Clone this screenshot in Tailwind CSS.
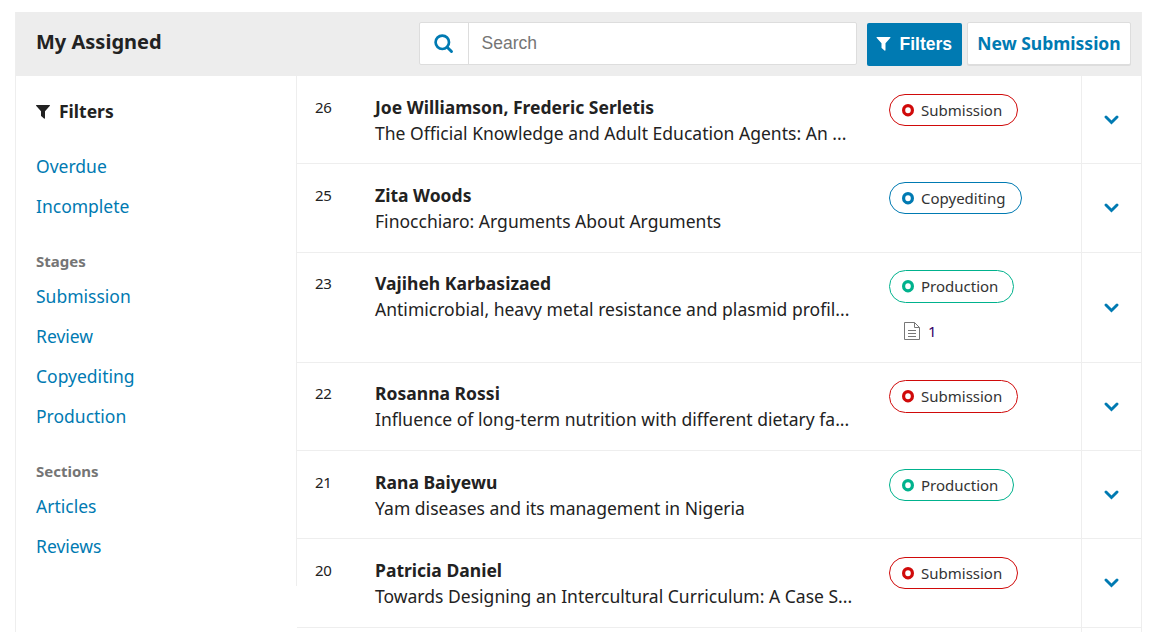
<!DOCTYPE html>
<html lang="en">
<head>
<meta charset="utf-8">
<title>My Assigned</title>
<script src="https://cdn.jsdelivr.net/npm/@tailwindcss/browser@4"></script>
</head>
<body class="h-[632px] overflow-hidden bg-white font-['Noto_Sans',sans-serif] text-[17.5px] leading-[26px] text-[#222]">
<svg class="hidden">
  <symbol id="funnel" viewBox="0 0 14 14"><path d="M0.3 0H13.7Q14.2 .5 13.7 1.1L9 6.200V13.300Q8.700 14.100 8 13.600L5.400 11.200Q5 10.900 5 10.400V6.200L.3 1.100Q-.2.500.3 0Z" fill="currentColor"/></symbol>
  <symbol id="chevron" viewBox="0 0 16 10"><path d="M2 2L7.500 7.500L13 2" fill="none" stroke="currentColor" stroke-width="2.900" stroke-linecap="round"/></symbol>
</svg>
<main class="mx-[15px] mt-3 mr-[19px] h-[640px] border-x border-[#eee]">
  <header class="flex h-16 items-start bg-[#ededed] pt-[10px] pr-[10px] pl-5">
    <h1 class="mt-[6px] w-[383px] text-[20px] leading-7 font-bold">My Assigned</h1>
    <div class="flex h-[43px] w-[438px] rounded-[2px] border border-[#ddd] bg-white">
      <div class="flex w-[49px] items-center justify-center border-r border-[#ddd] text-[#007ab2]">
        <svg class="h-5 w-5" viewBox="0 0 20 20"><circle cx="8.300" cy="8.300" r="6.700" fill="none" stroke="currentColor" stroke-width="2.700"/><path d="M13.200 13.200L17.500 17.500" stroke="currentColor" stroke-width="2.900" stroke-linecap="round"/></svg>
      </div>
      <div class="pt-[7px] pl-[12.500px] font-['Liberation_Sans',Arial,sans-serif] text-[#757575]">Search</div>
    </div>
    <button class="mt-[1px] ml-[10px] flex h-[43px] w-[95px] items-center rounded-[2px] bg-[#007ab2] pb-[1px] pl-[9px] font-['Liberation_Sans',Arial,sans-serif] font-bold text-white"><svg class="mr-[8.500px] h-[14px] w-[15px]"><use href="#funnel"/></svg>Filters</button>
    <button class="ml-[5px] flex h-[43px] w-[164px] items-center justify-center rounded-[2px] border border-[#ddd] bg-white pb-[2px] font-bold text-[#007ab2] shadow-[0_1px_0_#ddd]">New Submission</button>
  </header>
  <div class="flex">
    <aside class="h-[510px] w-[281px] border-r border-[#eee] pt-[22px] pl-5">
      <h2 class="flex items-center font-bold"><svg class="mt-[2px] mr-[9px] h-[14px] w-[14px]"><use href="#funnel"/></svg>Filters</h2>
      <nav class="mt-[22px] text-[#007ab2]">
        <div class="h-10 py-[7px]">Overdue</div>
        <div class="h-10 py-[7px]">Incomplete</div>
        <h3 class="mt-[22px] h-[26px] text-[15px] font-bold text-[#757575]">Stages</h3>
        <div class="mt-[2px] h-10 py-[7px]">Submission</div>
        <div class="h-10 py-[7px]">Review</div>
        <div class="h-10 py-[7px]">Copyediting</div>
        <div class="h-10 py-[7px]">Production</div>
        <h3 class="mt-[22px] h-[26px] text-[15px] font-bold text-[#757575]">Sections</h3>
        <div class="mt-[2px] h-10 py-[7px]">Articles</div>
        <div class="h-10 py-[7px]">Reviews</div>
      </nav>
    </aside>
    <section id="list" class="flex w-[844px] flex-col"></section>
  </div>
</main>
<script>
const red = 'border-[#d00a0a] text-[#d00a0a]', blue = 'border-[#007ab2] text-[#007ab2]', green = 'border-[#00b28d] text-[#00b28d]';
// id, authors, title, stage, stage colour, row height, top padding, pill size, chevron offset, galley count
const rows = [
  [26, 'Joe Williamson, Frederic Serletis', 'The Official Knowledge and Adult Education Agents: An ...', 'Submission', red, 'h-[88px]', 'pt-[18px]', 'h-8 w-[129px]', 'pt-[39px]'],
  [25, 'Zita Woods', 'Finocchiaro: Arguments About Arguments', 'Copyediting', blue, 'h-[89px]', 'pt-[18px]', 'h-8 w-[133px]', 'pt-[39px]'],
  [23, 'Vajiheh Karbasizaed', 'Antimicrobial, heavy metal resistance and plasmid profil...', 'Production', green, 'h-[110px]', 'pt-[17px]', 'h-[33px] w-[125px] pb-[1px]', 'pt-[50px]', 1],
  [22, 'Rosanna Rossi', 'Influence of long-term nutrition with different dietary fa...', 'Submission', red, 'h-[88px]', 'pt-[17px]', 'h-[33px] w-[129px] pb-[1px]', 'pt-[39px]'],
  [21, 'Rana Baiyewu', 'Yam diseases and its management in Nigeria', 'Production', green, 'h-[88px]', 'pt-[18px]', 'h-8 w-[125px]', 'pt-[39px]'],
  [20, 'Patricia Daniel', 'Towards Designing an Intercultural Curriculum: A Case S...', 'Submission', red, 'h-[89px]', 'pt-[18px]', 'h-8 w-[129px]', 'pt-[39px]'],
  ['', '', '', '', '', 'h-[20px]', '', '', '']
];
document.getElementById('list').innerHTML = rows.map(([id, who, title, stage, color, h, pt, ph, chev, files]) => `
<article class="flex shrink-0 border-b border-[#eee] ${h}">
  <div class="flex w-[784px] pl-[18px] ${pt}">
    <div class="w-[60px] text-[15px] tracking-[-0.4px]">${id}</div>
    <div class="w-[514px] whitespace-nowrap tracking-[0.015px]"><div class="font-bold">${who}</div><div>${title}</div></div>
    ${stage ? `<div class="text-[15px]">
      <div class="flex items-center rounded-full border pl-3 ${ph} ${color}"><svg class="mr-[7px] h-[13px] w-3 shrink-0" viewBox="0 0 12 13"><ellipse cx="6" cy="6.200" rx="4.400" ry="4.600" fill="none" stroke="currentColor" stroke-width="3.200"/></svg><span class="text-[#333]">${stage}</span></div>
      ${files ? `<div class="mt-[14px] flex items-center pl-[15px] text-[#330066]"><svg class="mr-2 h-[18px] w-4" viewBox="0 0 16 18" fill="none" stroke="#777"><path d="M.5.500H10.500L15.500 5.500V17.500H.5ZM10.500.500V5.500H15.500M4 8.500H12M4 11.500H12M4 14.500H12"/></svg><span class="mt-[1px]">${files}</span></div>` : ''}
    </div>` : ''}
  </div>
  <div class="grow border-l border-[#eee] pl-[22px] text-[#007ab2] ${chev}">${stage ? '<svg class="h-[10px] w-4"><use href="#chevron" width="16" height="10"/></svg>' : ''}</div>
</article>`).join('');
</script>
</body>
</html>
